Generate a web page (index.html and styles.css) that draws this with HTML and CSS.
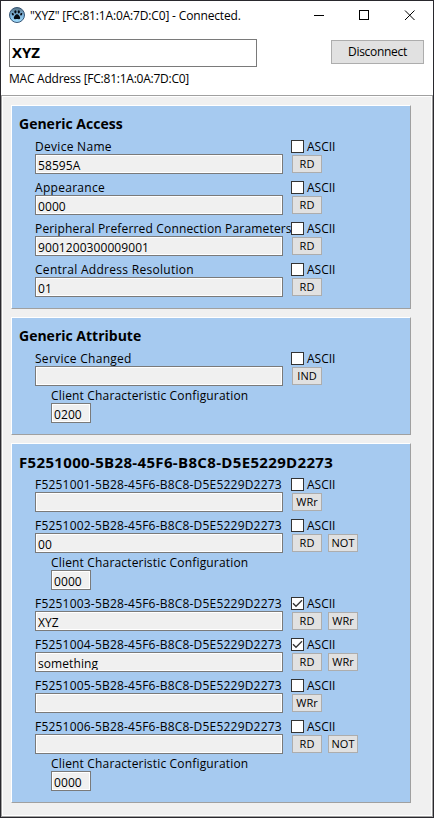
FILE: index.html
```html
<!DOCTYPE html>
<html lang="en">
<head>
<meta charset="utf-8">
<title>"XYZ" [FC:81:1A:0A:7D:C0] - Connected.</title>
<link rel="stylesheet" href="styles.css">
</head>
<body>
<div class="window">
  <header class="titlebar">
    <svg class="logo" width="16" height="16" viewBox="0 0 16 16">
      <defs><linearGradient id="orb" x1="0" y1="0" x2="0" y2="1"><stop offset="0" stop-color="#587485"/><stop offset=".5" stop-color="#7fb4dc"/><stop offset="1" stop-color="#a4e0ff"/></linearGradient></defs>
      <circle cx="8" cy="8" r="7.5" fill="url(#orb)" stroke="#365575"/>
      <g fill="#050a12"><ellipse cx="6.4" cy="4.8" rx="1.1" ry="1.6"/><ellipse cx="9.800" cy="4.8" rx="1.1" ry="1.6"/><ellipse cx="3.8" cy="7.200" rx="1" ry="1.3" transform="rotate(-25 3.8 7.2)"/><ellipse cx="12.2" cy="7.200" rx="1" ry="1.3" transform="rotate(25 12.2 7.2)"/><path d="M8 7.3C6.3 7.3 4.600 10 4.9 11.400C5.2 12.7 7 11.900 8 11.900S10.8 12.700 11.100 11.400C11.400 10 9.700 7.300 8 7.300Z"/></g>
    </svg>
    <span class="caption">"XYZ" [FC:81:1A:0A:7D:C0] - Connected.</span>
    <svg class="controls" width="138" height="29" viewBox="0 0 138 29" fill="none" stroke="#000" shape-rendering="crispEdges">
      <path d="M18 14.5H28M63.5 9.5H72.5V18.5H63.5Z"/><path d="M109 9.5L118.500 19M118.500 9.500L109 19" shape-rendering="auto"/>
    </svg>
  </header>
  <section class="device">
    <div class="name">XYZ</div>
    <button class="disconnect">Disconnect</button>
    <div class="mac">MAC Address [FC:81:1A:0A:7D:C0]</div>
  </section>
  <main class="services">
    <section class="service">
      <h2>Generic Access</h2>
      <div class="row"><span class="label wide">Device Name</span><span class="ascii"><i class="box"></i>ASCII</span><div class="field">58595A</div><div class="actions"><button>RD</button></div></div>
      <div class="row"><span class="label wide">Appearance</span><span class="ascii"><i class="box"></i>ASCII</span><div class="field">0000</div><div class="actions"><button>RD</button></div></div>
      <div class="row"><span class="label">Peripheral Preferred Connection Parameters</span><span class="ascii"><i class="box"></i>ASCII</span><div class="field">9001200300009001</div><div class="actions"><button>RD</button></div></div>
      <div class="row"><span class="label wide">Central Address Resolution</span><span class="ascii"><i class="box"></i>ASCII</span><div class="field">01</div><div class="actions"><button>RD</button></div></div>
    </section>
    <section class="service">
      <h2>Generic Attribute</h2>
      <div class="row"><span class="label wide">Service Changed</span><span class="ascii"><i class="box"></i>ASCII</span><div class="field"></div><div class="actions"><button>IND</button></div></div>
      <div class="config"><span class="label">Client Characteristic Configuration</span><div class="field">0200</div></div>
    </section>
    <section class="service">
      <h2 class="uuid-title">F5251000-5B28-45F6-B8C8-D5E5229D2273</h2>
      <div class="row"><span class="label uuid">F5251001-5B28-45F6-B8C8-D5E5229D2273</span><span class="ascii"><i class="box"></i>ASCII</span><div class="field"></div><div class="actions"><button>WRr</button></div></div>
      <div class="row"><span class="label uuid">F5251002-5B28-45F6-B8C8-D5E5229D2273</span><span class="ascii"><i class="box"></i>ASCII</span><div class="field">00</div><div class="actions"><button>RD</button><button>NOT</button></div></div>
      <div class="config"><span class="label">Client Characteristic Configuration</span><div class="field">0000</div></div>
      <div class="row"><span class="label uuid">F5251003-5B28-45F6-B8C8-D5E5229D2273</span><span class="ascii"><i class="box"><svg width="11" height="11" viewBox="0 0 11 11"><path d="M1 5.300L4 8.300L10 2.300"/></svg></i>ASCII</span><div class="field">XYZ</div><div class="actions"><button>RD</button><button>WRr</button></div></div>
      <div class="row"><span class="label uuid">F5251004-5B28-45F6-B8C8-D5E5229D2273</span><span class="ascii"><i class="box"><svg width="11" height="11" viewBox="0 0 11 11"><path d="M1 5.300L4 8.300L10 2.300"/></svg></i>ASCII</span><div class="field">something</div><div class="actions"><button>RD</button><button>WRr</button></div></div>
      <div class="row"><span class="label uuid">F5251005-5B28-45F6-B8C8-D5E5229D2273</span><span class="ascii"><i class="box"></i>ASCII</span><div class="field"></div><div class="actions"><button>WRr</button></div></div>
      <div class="row"><span class="label uuid">F5251006-5B28-45F6-B8C8-D5E5229D2273</span><span class="ascii"><i class="box"></i>ASCII</span><div class="field"></div><div class="actions"><button>RD</button><button>NOT</button></div></div>
      <div class="config"><span class="label">Client Characteristic Configuration</span><div class="field">0000</div></div>
    </section>
  </main>
</div>
</body>
</html>
```
FILE: styles.css
```css
* { box-sizing: border-box; }
body { margin: 0; font: 12px/16px "Open Sans", "Noto Sans", sans-serif; color: #000; }
button { font: inherit; color: inherit; padding: 0; background: #e1e1e1; border: 1px solid #adadad; border-radius: 0; white-space: nowrap; }
.window { width: 434px; height: 818px; border: 1px solid #29282d; background: #fff; display: flex; flex-direction: column; overflow: hidden; }
.titlebar { height: 30px; display: flex; align-items: flex-start; padding-left: 8px; flex: none; }
.logo { margin-top: 6px; }
.caption { margin: 7px 0 0 5px; flex: 1; white-space: nowrap; letter-spacing: -0.16px; }
.controls { flex: none; margin-right: -1px; }
.device { height: 64px; flex: none; display: grid; grid-template-columns: 248px 93px; grid-template-rows: 28px 24px; justify-content: space-between; padding: 8px 9px 0 8px; }
.name { border: 1px solid #7a7a7a; height: 28px; padding-left: 2px; font-size: 15px; line-height: 25px; font-weight: 700; }
.disconnect { height: 24px; margin-top: 1px; letter-spacing: -0.3px; }
.mac { line-height: 24px; white-space: nowrap; letter-spacing: -0.24px; }
.services { flex: 1; background: #f0f0f0; border: 1px solid #a0a0a0; box-shadow: inset 0 0 0 1px #fff; padding: 9px; display: flex; flex-direction: column; gap: 8px; }
.service { width: 400px; background: #a6caf0; border: 1px solid; border-color: #fff #a0a0a0 #a0a0a0 #fff; padding: 0 0 11px 23px; flex: none; }
h2 { margin: 0 0 0 -16px; height: 27px; padding-top: 7px; font-size: 14px; line-height: 22px; white-space: nowrap; }
.uuid-title { font-size: 15px; letter-spacing: 0.34px; }
.row { display: grid; grid-template-columns: 248px 90px; column-gap: 8px; grid-template-rows: 21px 20px; }
.label { line-height: 16px; padding-top: 6px; white-space: nowrap; letter-spacing: 0.17px; }
.wide { letter-spacing: 0.29px; }
.uuid { letter-spacing: 0.2px; }
.ascii { display: flex; height: 13px; line-height: 13px; margin-top: 7px; background: #a6caf0; }
.box { width: 13px; height: 13px; border: 1px solid #333; background: #fff; margin-right: 3px; display: block; }
.box svg { display: block; fill: none; stroke: #333; stroke-width: 1.3; }
.field { height: 20px; border: 1px solid #7a7a7a; background: #f0f0f0; box-shadow: inset 0 0 0 1px #fff; padding: 0 1px 1px 2px; line-height: 21px; overflow: clip; overflow-clip-margin: content-box; letter-spacing: 0.08px; }
.actions { display: flex; gap: 6px; padding: 1px 0 0 1px; }
.actions button { width: 30px; height: 18px; font-size: 11px; line-height: 16px; }
.config { width: 240px; margin-left: 16px; display: grid; grid-template-rows: 17px 20px; }
.config .label { padding-top: 2px; }
.config .field { width: 40px; }
```
